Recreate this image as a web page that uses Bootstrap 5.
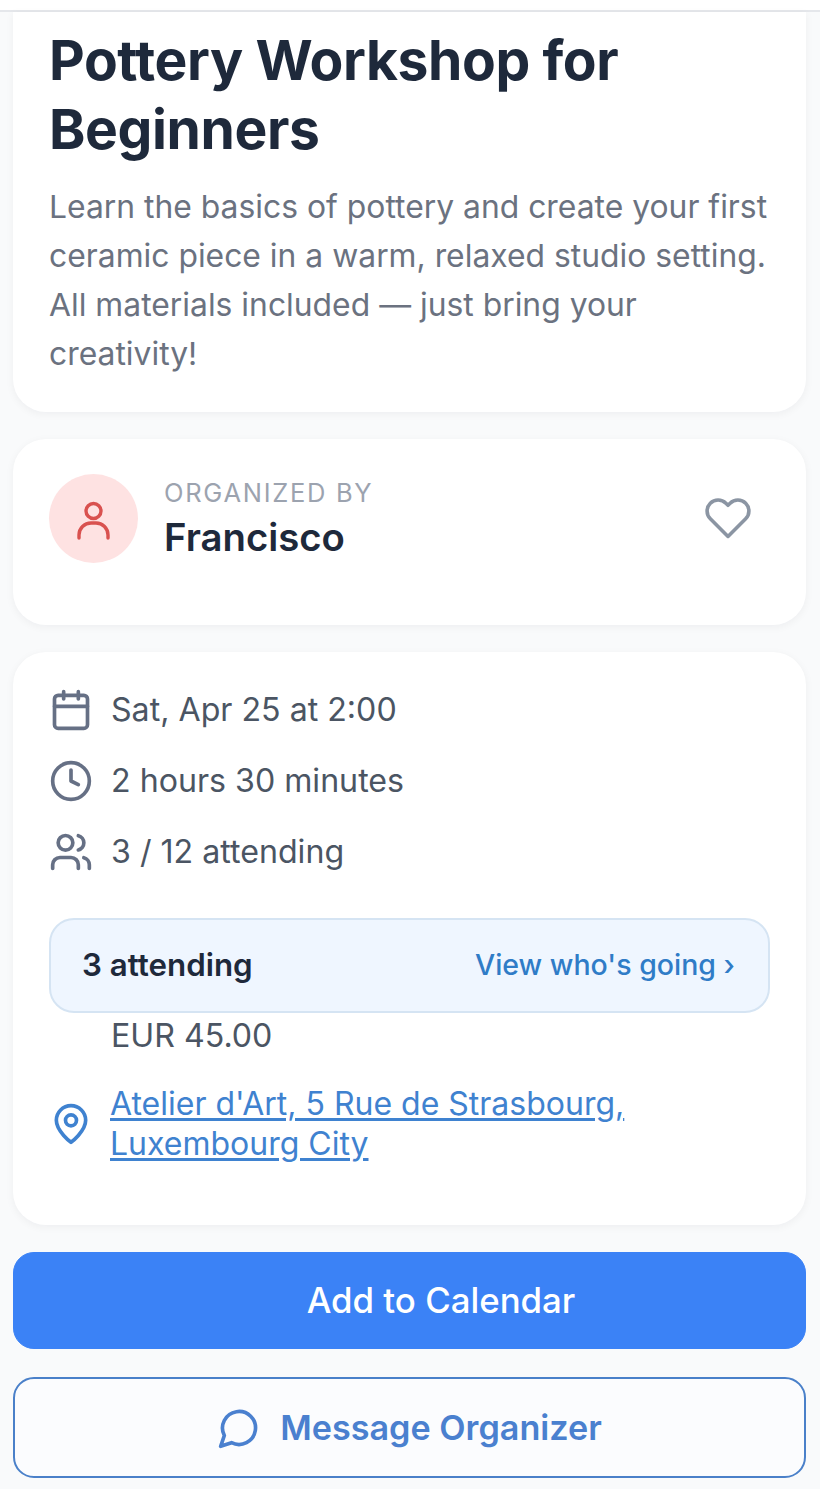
<!DOCTYPE html>
<html lang="en">
<head>
<meta charset="utf-8">
<title>Pottery Workshop for Beginners</title>
<link href="https://cdn.jsdelivr.net/npm/bootstrap@5.3.0/dist/css/bootstrap.min.css" rel="stylesheet">
<style>
html,body{background:#f9fafb;font-family:Inter,"Liberation Sans",sans-serif;}
body{height:1489px;overflow:hidden;}
.topbar{height:12px;background:#fff;border-bottom:2px solid #e5e7eb;}
.page-wrap{padding:0 14px 0 13px;}
.sheet{background:#fff;border-radius:33px;box-shadow:0 2px 8px rgba(17,24,39,.05);margin-bottom:27px;padding:0 36px;}
.sheet-head{border-radius:0 0 33px 33px;height:400px;padding:14px 30px 0 36px;}
.ev-title{font-size:55.2px;line-height:69px;font-weight:700;color:#1e293b;letter-spacing:-.4px;margin:0 0 18px;}
.ev-desc{font-size:31.85px;line-height:49px;color:#6b7280;margin:0;}
.sheet-org{height:186px;padding-top:35px;}
.avatar{width:89px;height:89px;background:#fee2e2;color:#d9514f;}
.org-text{margin-left:2px;padding-top:4px;}
.org-label{font-size:25.5px;line-height:30px;letter-spacing:1.7px;color:#9ca3af;}
.org-name{font-size:38.3px;line-height:46px;font-weight:600;color:#1e293b;margin-top:6px;}
.heart{color:#8b95a3;margin:20px 18px 0 0;}
.sheet-info{height:573px;padding-top:22px;}
.info-row{height:71px;gap:18px;font-size:32.15px;color:#4b5563;}
.info-row span{padding-top:2px;}
.info-ico{width:44px;flex:none;color:#667085;}
.att{height:95px;margin-top:31px;background:#eff6ff;border:2px solid #d5e4f3;border-radius:25px;padding:0 33px 0 31px;}
.att-count{font-size:31.3px;font-weight:600;color:#1e293b;}
.att-view{font-size:28.5px;font-weight:500;color:#2f7cc7;text-decoration:none;}
.price{height:47px;padding-left:62px;font-size:32.15px;color:#4b5563;}
.loc{margin-top:24px;gap:17px;}
.loc a{font-size:32px;line-height:40px;color:#3f82d0;text-decoration:underline;text-underline-offset:3px;}
.loc .info-ico{color:#3f82d0;}
.act{display:flex;align-items:center;justify-content:center;border-radius:21px;font-size:34.8px;font-weight:500;width:100%;}
.act-primary{height:97px;background:#3b82f6;border-color:#3b82f6;color:#fff;margin-bottom:28px;padding-left:75px;}
.act-outline{height:101px;background:#fbfcfe;border:2px solid #4a80c9;color:#4a80cf;gap:19px;font-size:34.2px;font-weight:600;}
</style>
</head>
<body>
<div class="topbar"></div>
<main class="page-wrap">
  <section class="sheet sheet-head">
    <h1 class="ev-title">Pottery Workshop for Beginners</h1>
    <p class="ev-desc">Learn the basics of pottery and create your first ceramic piece in a warm, relaxed studio setting. All materials included — just bring your creativity!</p>
  </section>

  <section class="sheet sheet-org d-flex align-items-start justify-content-between">
    <div class="d-flex align-items-start gap-4">
      <div class="avatar rounded-circle d-flex align-items-center justify-content-center">
        <svg width="44" height="44" viewBox="0 0 44 44" fill="none" stroke="currentColor" stroke-width="3.4" stroke-linecap="round" stroke-linejoin="round"><circle cx="21.5" cy="14" r="7.5"/><path d="M7 41v-3a12 12 0 0 1 12-12h5a12 12 0 0 1 12 12v3"/></svg>
      </div>
      <div class="org-text">
        <div class="org-label">ORGANIZED BY</div>
        <div class="org-name">Francisco</div>
      </div>
    </div>
    <svg class="heart" width="48" height="48" viewBox="0 0 24 24" fill="none" stroke="currentColor" stroke-width="1.8" stroke-linecap="round" stroke-linejoin="round"><path d="M20.84 4.61a5.5 5.5 0 0 0-7.78 0L12 5.67l-1.06-1.06a5.5 5.5 0 0 0-7.78 7.78L12 21.23l8.84-8.84a5.5 5.5 0 0 0 0-7.78z"/></svg>
  </section>

  <section class="sheet sheet-info">
    <div class="info-row d-flex align-items-center">
      <svg class="info-ico" width="44" height="44" viewBox="0 0 24 24" fill="none" stroke="currentColor" stroke-width="2" stroke-linecap="round" stroke-linejoin="round"><rect x="3" y="4" width="18" height="18" rx="2"/><path d="M16 2v4M8 2v4M3 10h18"/></svg>
      <span>Sat, Apr 25 at 2:00</span>
    </div>
    <div class="info-row d-flex align-items-center">
      <svg class="info-ico" width="44" height="44" viewBox="0 0 24 24" fill="none" stroke="currentColor" stroke-width="2" stroke-linecap="round" stroke-linejoin="round"><circle cx="12" cy="12" r="10"/><path d="M12 6v6l4 2"/></svg>
      <span>2 hours 30 minutes</span>
    </div>
    <div class="info-row d-flex align-items-center">
      <svg class="info-ico" width="44" height="44" viewBox="0 0 24 24" fill="none" stroke="currentColor" stroke-width="2" stroke-linecap="round" stroke-linejoin="round"><path d="M16 21v-2a4 4 0 0 0-4-4H6a4 4 0 0 0-4 4v2"/><circle cx="9" cy="7" r="4"/><path d="M22 21v-2a4 4 0 0 0-3-3.87M16 3.13a4 4 0 0 1 0 7.75"/></svg>
      <span>3 / 12 attending</span>
    </div>
    <div class="att d-flex align-items-center justify-content-between">
      <span class="att-count">3 attending</span>
      <a class="att-view" href="#">View who's going ›</a>
    </div>
    <div class="price d-flex align-items-center">EUR 45.00</div>
    <div class="loc d-flex align-items-center">
      <svg class="info-ico" width="44" height="44" viewBox="0 0 24 24" fill="none" stroke="currentColor" stroke-width="2" stroke-linecap="round" stroke-linejoin="round"><path d="M20 10c0 6-8 12-8 12s-8-6-8-12a8 8 0 0 1 16 0z"/><circle cx="12" cy="10" r="3"/></svg>
      <a href="#">Atelier d'Art, 5 Rue de Strasbourg,<br>Luxembourg City</a>
    </div>
  </section>

  <button type="button" class="btn act act-primary">Add to Calendar</button>
  <button type="button" class="btn act act-outline">
    <svg width="44" height="44" viewBox="0 0 24 24" fill="none" stroke="currentColor" stroke-width="2" stroke-linecap="round" stroke-linejoin="round"><path d="M7.9 20A9 9 0 1 0 4 16.1L2 22z"/></svg>
    <span>Message Organizer</span>
  </button>
</main>
</body>
</html>
